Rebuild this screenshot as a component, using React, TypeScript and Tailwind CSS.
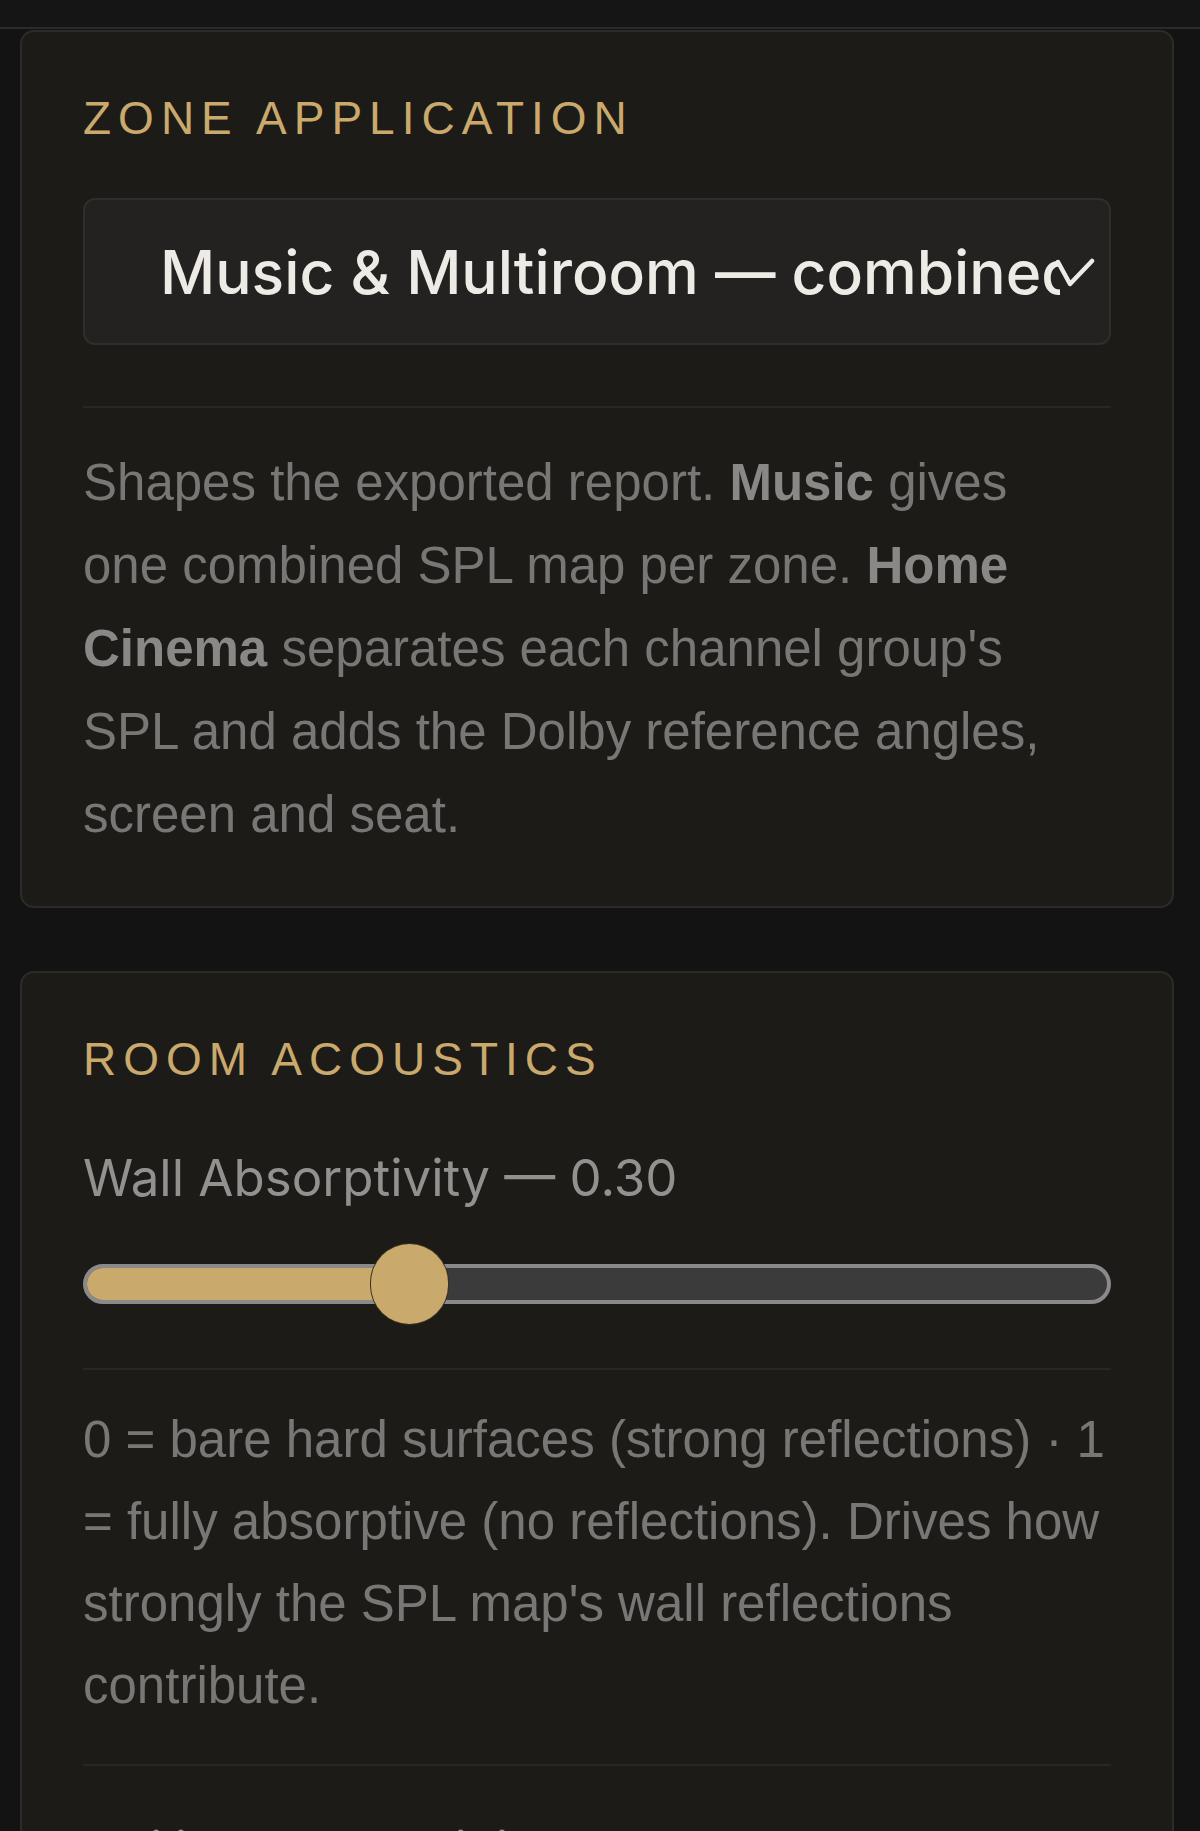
import React from "react";

const body = { fontFamily: '"Liberation Sans", Arial, Helvetica, sans-serif' };
const sys = { fontFamily: 'Inter, "Liberation Sans", Arial, sans-serif' };

function Title({ children }: { children: React.ReactNode }) {
  return (
    <div
      className="text-[46px] leading-[46px] tracking-[7px] text-[#c9a96c] uppercase"
      style={body}
    >
      {children}
    </div>
  );
}

function Separator({ className = "" }: { className?: string }) {
  return <div className={`h-[2px] bg-[#292724] ${className}`} />;
}

function Label({ children, className = "" }: { children: React.ReactNode; className?: string }) {
  return (
    <div className={`text-[51px] leading-[54px] text-[#929190] ${className}`} style={sys}>
      {children}
    </div>
  );
}

function Slider({ value }: { value: number }) {
  const thumb = 77;
  return (
    <div className="relative h-[80px] flex items-center">
      <div className="relative h-[40px] w-full rounded-full border-[4px] border-[#8a8a8a] bg-[#3b3b3b] overflow-hidden">
        <div
          className="h-full bg-[#c9aa6c]"
          style={{ width: `calc(${value} * (100% - ${thumb}px) + ${thumb / 2}px)` }}
        />
      </div>
      <div
        className="absolute top-0 h-[80px] w-[77px] rounded-full bg-[#c9aa6c] shadow-[0_0_0_1px_#3b301d]"
        style={{ left: `calc(${value} * (100% - ${thumb}px) + 3px)` }}
      />
    </div>
  );
}

export default function App() {
  return (
    <div className="min-h-screen bg-[#131313]" style={body}>
      <div className="h-[29px] bg-[#151515] border-b-[2px] border-[#2b2b2b]" />
      <div className="pl-[20px] pr-[26px] pt-[1px] pb-[60px] flex flex-col gap-[63px]">
        {/* Zone application card */}
        <section className="rounded-[14px] border-[2px] border-[#2d2b28] bg-[#1d1b18] px-[61px] pt-[63px] pb-[50px]">
          <Title>Zone Application</Title>
          <div className="relative mt-[57px] h-[147px] rounded-[12px] border-[2px] border-[#302e2b] bg-[#242220] flex items-center pl-[75px] pr-[49px]">
            <span
              className="block flex-1 overflow-hidden whitespace-nowrap text-[60.5px] font-medium text-[#eeebe6] leading-[72px]"
              style={sys}
            >
              Music &amp; Multiroom — combined
            </span>
            <svg
              className="absolute right-[13px] top-[58px]"
              width="40"
              height="30"
              viewBox="0 0 40 30"
              fill="none"
            >
              <polyline
                points="2,4 14,26 36,3"
                stroke="#eeebe6"
                strokeWidth="4.5"
                strokeLinecap="round"
                strokeLinejoin="round"
              />
            </svg>
          </div>
          <Separator className="mt-[61px]" />
          <p className="mt-[33px] text-[51px] leading-[83px] text-[#797775]">
            Shapes the exported report. <b className="font-bold text-[#8a8886]">Music</b> gives
            <br />
            one combined SPL map per zone. <b className="font-bold text-[#8a8886]">Home</b>
            <br />
            <b className="font-bold text-[#8a8886]">Cinema</b> separates each channel group's
            <br />
            SPL and adds the Dolby reference angles,
            <br />
            screen and seat.
          </p>
        </section>

        {/* Room acoustics card */}
        <section className="rounded-[14px] border-[2px] border-[#2d2b28] bg-[#1d1b18] px-[61px] pt-[63px] pb-[54px]">
          <Title>Room Acoustics</Title>
          <Label className="mt-[69px]">Wall Absorptivity — 0.30</Label>
          <div className="mt-[39px]">
            <Slider value={0.3} />
          </div>
          <Separator className="mt-[44px]" />
          <p className="mt-[29px] text-[51px] leading-[82px] text-[#797775]">
            0 = bare hard surfaces (strong reflections) · 1
            <br />
            = fully absorptive (no reflections). Drives how
            <br />
            strongly the SPL map's wall reflections
            <br />
            contribute.
          </p>
          <Separator className="mt-[37px]" />
          <Label className="mt-[57px]">Ceiling Absorptivity — 0.30</Label>
          <div className="mt-[39px]">
            <Slider value={0.3} />
          </div>
        </section>
      </div>
    </div>
  );
}
